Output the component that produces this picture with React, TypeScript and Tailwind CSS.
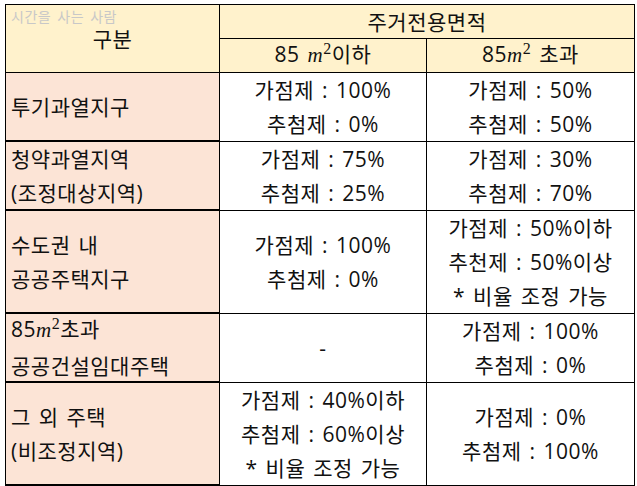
import React from 'react';

const font = "font-['Open_Sans','Noto_Sans_CJK_KR',sans-serif]";

function M2() {
  return (
    <span className="font-['Liberation_Serif',serif]">
      <span className="italic">m</span>
      <span className="relative -top-[8px] text-[16px]">2</span>
    </span>
  );
}

function Lines({ lines }: { lines: React.ReactNode[] }) {
  return (
    <>
      {lines.map((l, i) => (
        <div key={i}>{l}</div>
      ))}
    </>
  );
}

const rows: { label: React.ReactNode[]; a: React.ReactNode[]; b: React.ReactNode[]; h: string }[] = [
  { label: ['투기과열지구'], a: ['가점제 : 100%', '추첨제 : 0%'], b: ['가점제 : 50%', '추첨제 : 50%'], h: 'h-[67px]' },
  { label: ['청약과열지역', '(조정대상지역)'], a: ['가점제 : 75%', '추첨제 : 25%'], b: ['가점제 : 30%', '추첨제 : 70%'], h: 'h-[67px]' },
  {
    label: ['수도권 내', '공공주택지구'],
    a: ['가점제 : 100%', '추첨제 : 0%'],
    b: ['가점제 : 50%이하', '추천제 : 50%이상', '* 비율 조정 가능'],
    h: 'h-[101px]',
  },
  {
    label: [<>85<M2 />초과</>, '공공건설임대주택'],
    a: ['-'],
    b: ['가점제 : 100%', '추첨제 : 0%'],
    h: 'h-[67px]',
  },
  {
    label: ['그 외 주택', '(비조정지역)'],
    a: ['가점제 : 40%이하', '추첨제 : 60%이상', '* 비율 조정 가능'],
    b: ['가점제 : 0%', '추첨제 : 100%'],
    h: 'h-[101px]',
  },
];

export default function App() {
  return (
    <div
      className={`min-h-screen bg-white pt-[4px] pl-[5px] ${font} text-[21px] leading-[34px] tracking-[0.5px] [word-spacing:2px] text-[#111]`}
    >
      <div className="grid w-[630px] grid-cols-[213px_206px_207px] gap-px bg-black p-px">
        {/* Header */}
        <div className="relative row-span-2 flex items-center justify-center bg-[#fff2cc]">
          <span className="absolute left-[5px] top-[3px] text-[14px] leading-[18px] tracking-[0.5px] text-[#c8c8c8]">
            시간을 사는 사람
          </span>
          <span>구분</span>
        </div>
        <div className="col-span-2 flex h-[33px] items-center justify-center bg-[#fff2cc]">주거전용면적</div>
        <div className="flex h-[33px] items-center justify-center bg-[#fff2cc]">
          <span>
            85 <M2 />
            이하
          </span>
        </div>
        <div className="flex h-[33px] items-center justify-center bg-[#fff2cc]">
          <span>
            85<M2 /> 초과
          </span>
        </div>

        {rows.map((r, i) => (
          <React.Fragment key={i}>
            <div className={`flex flex-col justify-center bg-[#fce4d6] pl-[5px] ${r.h}`}>
              <Lines lines={r.label} />
            </div>
            <div className="flex flex-col items-center justify-center bg-white">
              <Lines lines={r.a} />
            </div>
            <div className="flex flex-col items-center justify-center bg-white">
              <Lines lines={r.b} />
            </div>
          </React.Fragment>
        ))}
      </div>
    </div>
  );
}
